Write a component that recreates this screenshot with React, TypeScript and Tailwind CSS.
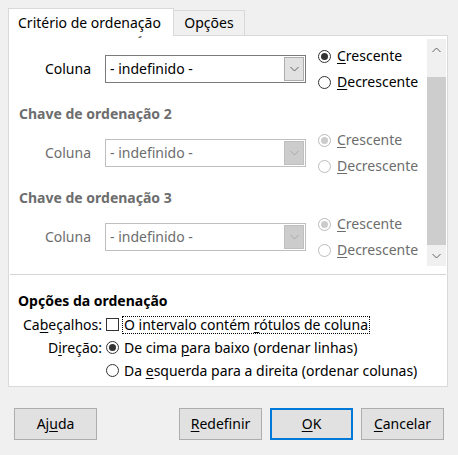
import type { ReactNode } from "react";

function U({ children }: { children: ReactNode }) {
  return <span className="underline underline-offset-2">{children}</span>;
}

function Radio({ checked, disabled }: { checked?: boolean; disabled?: boolean }) {
  return (
    <span
      className={`w-[13px] h-[13px] rounded-full border flex items-center justify-center shrink-0 bg-white ${
        disabled ? "border-[#bcbcbc]" : "border-[#333333]"
      }`}
    >
      {checked && (
        <span className={`w-[7px] h-[7px] rounded-full ${disabled ? "bg-[#cccccc]" : "bg-[#333333]"}`} />
      )}
    </span>
  );
}

function Chevron({ dir, color }: { dir: "up" | "down"; color: string }) {
  return (
    <svg width="9" height="6" viewBox="0 0 9 6" fill="none">
      <path
        d={dir === "down" ? "M0.5 1 L4.5 5 L8.5 1" : "M0.5 5 L4.5 1 L8.5 5"}
        stroke={color}
        strokeWidth="1"
      />
    </svg>
  );
}

function SortKey({ n, disabled }: { n: number; disabled?: boolean }) {
  const text = disabled ? "text-[#6d6d6d]" : "text-black";
  return (
    <div className="mb-[9px]">
      <div className="h-[20px] pl-[9px] flex items-center font-bold text-[#6d6d6d]">
        Chave de ordenação {n}
      </div>
      <div className="mt-[3px] h-[52px] flex items-center">
        <div className={`w-[95px] pr-[14px] text-right ${text}`}>Coluna</div>
        <div
          className={`w-[201px] h-[28px] flex border bg-white ${
            disabled ? "border-[#bfbfbf]" : "border-[#7a7a7a]"
          }`}
        >
          <div className={`flex-1 pl-[4px] flex items-center ${text}`}>- indefinido -</div>
          <div
            className={`w-[20px] my-px mr-px flex items-center justify-center border ${
              disabled ? "bg-[#cccccc] border-[#bfbfbf]" : "bg-[#e1e1e1] border-[#adadad]"
            }`}
          >
            <Chevron dir="down" color={disabled ? "#a8a8a8" : "#606060"} />
          </div>
        </div>
        <div className="ml-[12px] flex flex-col">
          <div className={`h-[26px] flex items-center gap-[6px] ${text}`}>
            <Radio checked disabled={disabled} />
            <span>
              <U>C</U>rescente
            </span>
          </div>
          <div className={`h-[26px] flex items-center gap-[6px] ${text}`}>
            <Radio disabled={disabled} />
            <span>
              <U>D</U>ecrescente
            </span>
          </div>
        </div>
      </div>
    </div>
  );
}

function Button({ children, primary, className = "" }: { children: ReactNode; primary?: boolean; className?: string }) {
  return (
    <button
      className={`w-[83px] h-[32px] bg-[#e1e1e1] flex items-center justify-center ${
        primary ? "border-2 border-[#0078d7]" : "border border-[#adadad]"
      } ${className}`}
    >
      <span>{children}</span>
    </button>
  );
}

export default function App() {
  return (
    <div className="w-[458px] h-[455px] bg-[#f0f0f0] text-[14px] leading-none text-black font-['Segoe_UI','Noto_Sans',sans-serif] overflow-hidden">
      {/* tabs */}
      <div className="pt-[8px] pl-[8px] flex items-end">
        <div className="relative z-10 w-[166px] h-[28px] -mb-px bg-white border border-b-0 border-[#d9d9d9] pl-[9px] pt-[7px]">
          Critério de ordenação
        </div>
        <div className="w-[71px] h-[25px] bg-[#f0f0f0] border border-l-0 border-b-0 border-[#d9d9d9] flex items-center justify-center pb-[1px]">
          Opções
        </div>
      </div>

      {/* panel */}
      <div className="ml-[8px] w-[440px] h-[352px] bg-white border border-[#d9d9d9]">
        <div className="mx-px h-[239px] flex border-b border-[#d4d4d4]">
          <div className="flex-1 overflow-hidden">
            <div className="-mt-[16px]">
              <SortKey n={1} />
              <SortKey n={2} disabled />
              <SortKey n={3} disabled />
            </div>
          </div>
          <div className="w-[19px] mt-[3px] mb-[8px] bg-[#f0f0f0] flex flex-col">
            <div className="h-[21px] flex items-center justify-center">
              <Chevron dir="up" color="#606060" />
            </div>
            <div className="h-[17px]" />
            <div className="flex-1 bg-[#cdcdcd]" />
            <div className="h-[21px] flex items-center justify-center">
              <Chevron dir="down" color="#606060" />
            </div>
          </div>
        </div>

        <div className="pt-[16px]">
          <div className="h-[20px] pl-[9px] flex items-center font-bold">Opções da ordenação</div>
          <div className="h-[23px] flex items-center mt-[2px]">
            <div className="w-[93px] text-right">
              Ca<U>b</U>eçalhos:
            </div>
            <span className="ml-[4px] w-[13px] h-[13px] border border-[#333333] bg-white shrink-0" />
            <span className="ml-[3px] px-[1px] h-[18px] flex items-center border border-dotted border-black">
              <span>
                O intervalo contém <U>r</U>ótulos de coluna
              </span>
            </span>
          </div>
          <div className="h-[23px] flex items-center">
            <div className="w-[93px] text-right">
              D<U>i</U>reção:
            </div>
            <span className="ml-[4px]">
              <Radio checked />
            </span>
            <span className="ml-[5px]">
              De cima <U>p</U>ara baixo (ordenar linhas)
            </span>
          </div>
          <div className="h-[23px] flex items-center">
            <span className="ml-[97px]">
              <Radio />
            </span>
            <span className="ml-[5px]">
              Da <U>e</U>squerda para a direita (ordenar colunas)
            </span>
          </div>
        </div>
      </div>

      {/* buttons */}
      <div className="mt-[21px] flex pl-[14px]">
        <Button>
          Aj<U>u</U>da
        </Button>
        <Button className="ml-[82px]">
          <U>R</U>edefinir
        </Button>
        <Button primary className="ml-[8px]">
          <U>O</U>K
        </Button>
        <Button className="ml-[8px]">
          <U>C</U>ancelar
        </Button>
      </div>
    </div>
  );
}
